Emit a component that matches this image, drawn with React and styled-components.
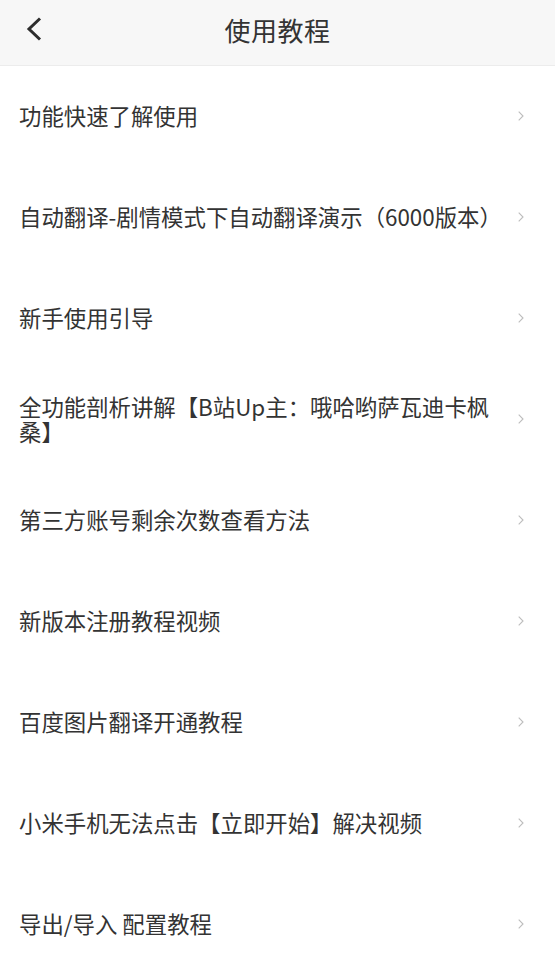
import React from "react";
import styled, { createGlobalStyle } from "styled-components";

const GlobalStyle = createGlobalStyle`
  html, body {
    margin: 0;
    padding: 0;
    background: #fff;
  }
  body {
    font-family: "Noto Sans CJK SC", "Noto Sans", sans-serif;
  }
`;

// Layout

const Page = styled.div`
  width: 555px;
  min-height: 970px;
  background: #fff;
`;

const Header = styled.header`
  position: relative;
  height: 66px;
  padding-bottom: 7px;
  background: #f7f7f7;
  border-bottom: 1px solid #ececec;
  box-sizing: border-box;
  display: flex;
  align-items: center;
  justify-content: center;
`;

const BackButton = styled.button`
  position: absolute;
  left: 22px;
  top: 13px;
  border: 0;
  background: none;
  padding: 4px;
  display: flex;
  align-items: center;
  cursor: pointer;
`;

const Title = styled.h1`
  margin: 0;
  font-size: 26px;
  font-weight: 400;
  color: #333;
  letter-spacing: 0.5px;
`;

const List = styled.ul`
  list-style: none;
  margin: 0;
  padding: 0;
`;

const Row = styled.li`
  height: 101px;
  box-sizing: border-box;
  padding: 0 31px 2px 19px;
  display: flex;
  align-items: center;
  cursor: pointer;
`;

const Label = styled.span`
  flex: 1;
  margin-right: 15px;
  font-size: 22.4px;
  line-height: 25px;
  color: #333;
`;

const Chevron = () => (
  <svg width="6" height="10" viewBox="0 0 6 10">
    <path d="M0.7 0.7 L5 5 L0.7 9.3" fill="none" stroke="#bdbdbd" strokeWidth="1.1" />
  </svg>
);

const BackIcon = () => (
  <svg width="16" height="24" viewBox="0 0 16 24">
    <path d="M14 1.5 L3 12 L14 22.5" fill="none" stroke="#2d2d2d" strokeWidth="3" />
  </svg>
);

const items = [
  "功能快速了解使用",
  "自动翻译-剧情模式下自动翻译演示（6000版本）",
  "新手使用引导",
  "全功能剖析讲解【B站Up主：哦哈哟萨瓦迪卡枫桑】",
  "第三方账号剩余次数查看方法",
  "新版本注册教程视频",
  "百度图片翻译开通教程",
  "小米手机无法点击【立即开始】解决视频",
  "导出/导入 配置教程",
];

export default function App() {
  return (
    <Page>
      <GlobalStyle />
      <Header>
        <BackButton aria-label="返回">
          <BackIcon />
        </BackButton>
        <Title>使用教程</Title>
      </Header>
      <List>
        {items.map((text, index) => (
          <Row key={index}>
            <Label>{text}</Label>
            <Chevron />
          </Row>
        ))}
      </List>
    </Page>
  );
}
